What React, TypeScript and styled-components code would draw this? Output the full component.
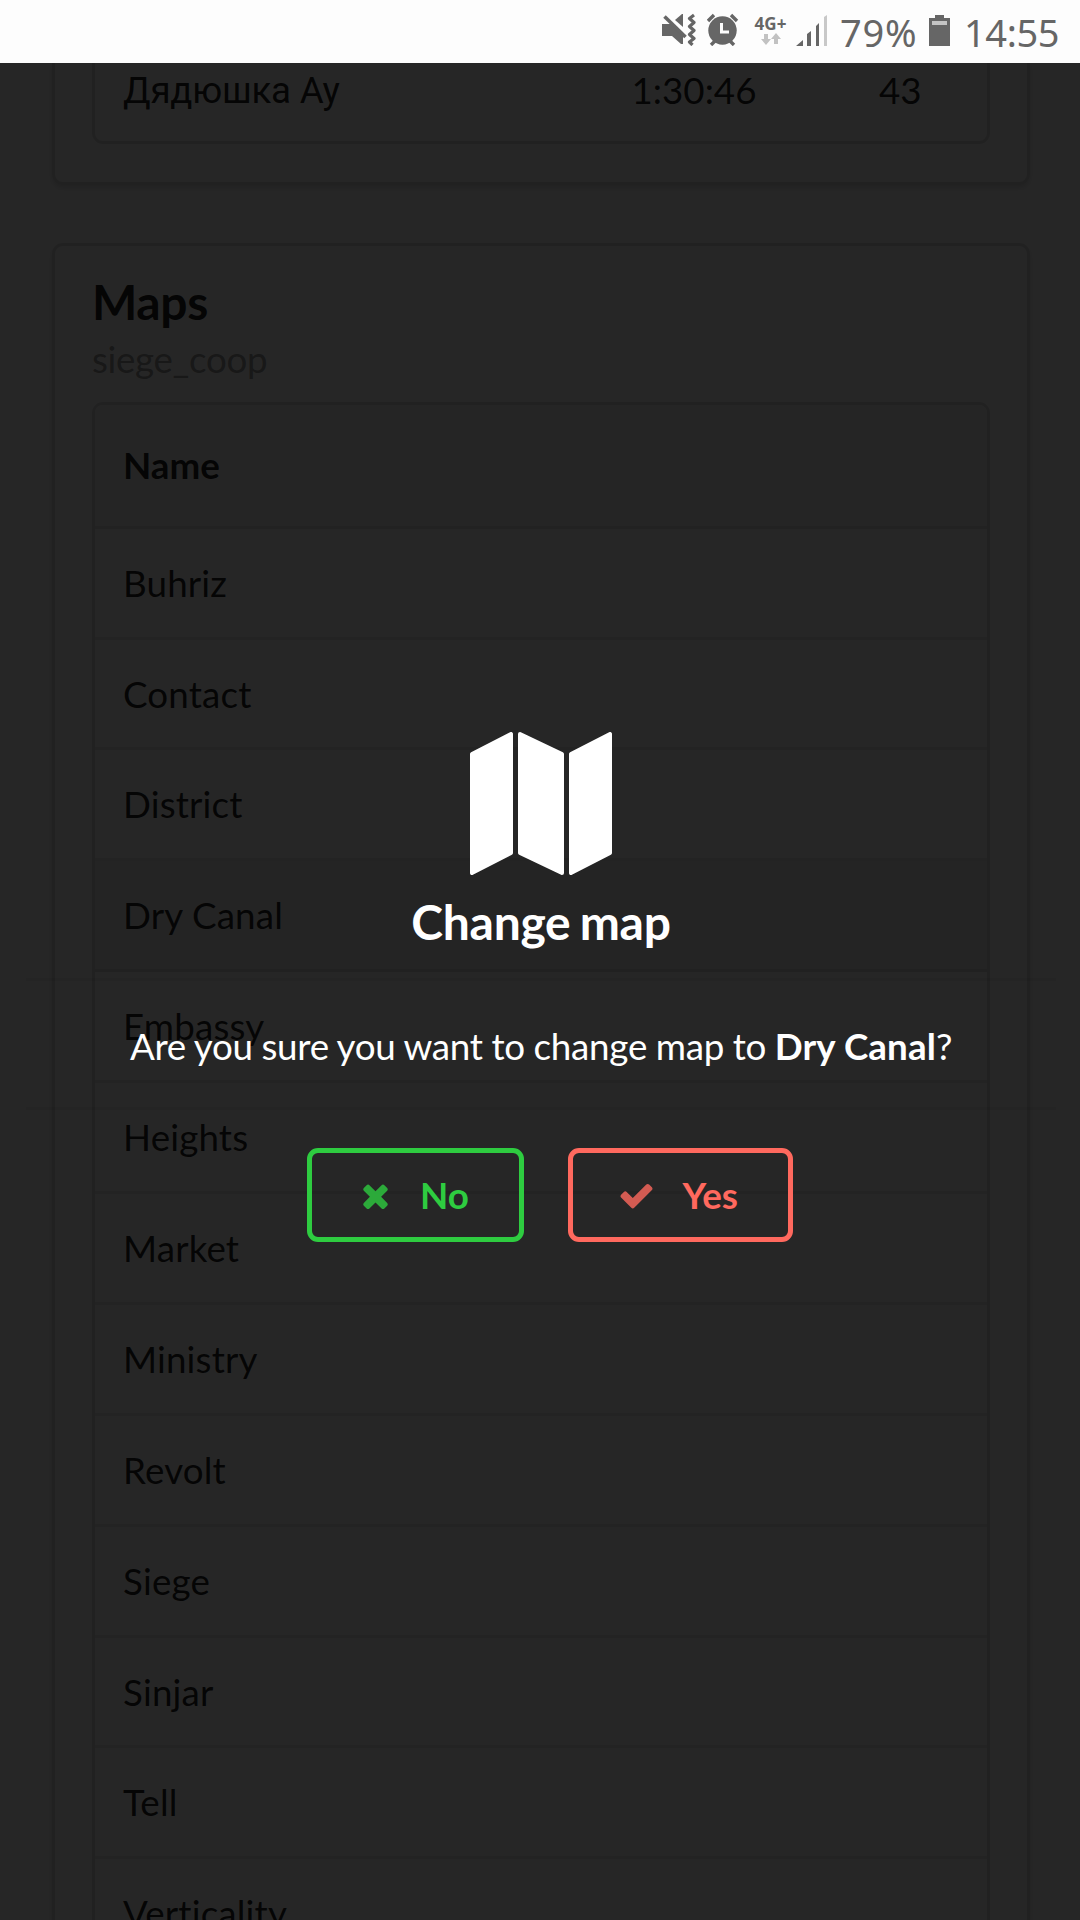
import React from "react";
import styled, { createGlobalStyle } from "styled-components";

const GlobalStyle = createGlobalStyle`
  *, *::before, *::after { box-sizing: border-box; }
  body { margin: 0; background: #ffffff; }
`;

const Screen = styled.div`
  display: flex;
  flex-direction: column;
  width: 1080px;
  height: 1920px;
  overflow: hidden;
  background: #ffffff;
  font-family: Lato, "Liberation Sans", sans-serif;
  font-size: 36.75px;
  font-variant-ligatures: none;
  line-height: 48px;
  color: rgba(0, 0, 0, 0.87);
`;

const StatusBar = styled.header`
  display: flex;
  flex: none;
  align-items: flex-start;
  height: 63px;
  padding: 12px 20px 0 0;
  justify-content: flex-end;
  background: #fdfdfd;
  color: #666666;
  font-family: "Noto Sans", "Open Sans", sans-serif;
  font-size: 38px;
  line-height: 41px;
`;

const StatusIcon = styled.svg<{ $gap: number }>`
  flex: none;
  margin: 1px ${(p) => p.$gap}px 0 0;
  fill: currentColor;
`;

const Network = styled.div`
  display: flex;
  flex-direction: column;
  align-items: center;
  width: 33px;
  margin-right: 9px;
  padding-top: 3px;
  font-size: 17px;
  font-weight: 700;
  line-height: 18px;
  white-space: nowrap;
`;

const Percent = styled.span`
  width: 77px;
  margin-right: 12px;
  letter-spacing: 0.8px;
  white-space: nowrap;
`;

const Clock = styled.span`
  width: 96px;
  letter-spacing: -0.4px;
  white-space: nowrap;
`;

const Viewport = styled.div`
  position: relative;
  flex: 1;
  min-height: 0;
  overflow: hidden;
`;

const Page = styled.main`
  display: flex;
  flex-direction: column;
  gap: 58px;
  padding: 0 50px 0 52px;
`;

const Card = styled.section<{ $continued?: boolean }>`
  padding: ${(p) => (p.$continued ? "0 37px 38px" : "29px 37px 38px")};
  border: 3px solid rgba(34, 36, 38, 0.15);
  border-top-width: ${(p) => (p.$continued ? 0 : 3)}px;
  border-radius: ${(p) => (p.$continued ? "0 0 11px 11px" : "11px")};
  box-shadow: 0 3px 5px rgba(34, 36, 38, 0.15);
`;

const CardTitle = styled.h2`
  margin: 0;
  font-size: 48px;
  font-weight: 700;
  line-height: 54px;
  letter-spacing: -0.4px;
`;

const CardMeta = styled.div`
  margin: 8px 0 21.3px;
  color: rgba(0, 0, 0, 0.4);
  line-height: 44px;
  letter-spacing: -0.35px;
`;

const Table = styled.div<{ $continued?: boolean }>`
  overflow: hidden;
  border: 3px solid rgba(34, 36, 38, 0.15);
  border-top-width: ${(p) => (p.$continued ? 0 : 3)}px;
  border-radius: ${(p) => (p.$continued ? "0 0 11px 11px" : "11px")};
`;

const HeaderRow = styled.div`
  display: flex;
  align-items: center;
  height: 123.4px;
  padding: 0 28px;
  border-bottom: 3px solid rgba(34, 36, 38, 0.1);
  background: #f8f8f8;
  font-weight: 700;
`;

const Row = styled.div<{ $active?: boolean }>`
  display: flex;
  align-items: center;
  height: 110.9px;
  padding: 0 28px;
  border-bottom: 3px solid rgba(34, 36, 38, 0.1);
  background: ${(p) => (p.$active ? "rgba(0, 0, 0, 0.06)" : "transparent")};
  letter-spacing: 0.15px;
`;

const PlayerRow = styled.div`
  display: grid;
  grid-template-columns: 508.5px 247.5px 1fr;
  height: 78px;
  padding: 3px 0 0 28px;
`;

const PlayerName = styled.span`
  padding-top: 1px;
  font-family: Roboto, sans-serif;
  letter-spacing: -0.25px;
`;

const Dimmer = styled.div`
  position: absolute;
  inset: 0;
  display: flex;
  flex-direction: column;
  align-items: center;
  padding: 669px 24px 0 26px;
  background: rgba(0, 0, 0, 0.85);
  color: #ffffff;
`;

const ModalHeader = styled.div`
  display: flex;
  flex-direction: column;
  align-items: center;
  width: 100%;
  height: 249px;
  border-bottom: 3px solid rgba(0, 0, 0, 0.05);
`;

const ModalTitle = styled.h1`
  margin: 18px 0 0;
  font-size: 48px;
  font-weight: 700;
  line-height: 58px;
  letter-spacing: -0.3px;
  word-spacing: -2px;
`;

const ModalBody = styled.p`
  width: 100%;
  height: 129px;
  margin: 0;
  padding-top: 41px;
  border-bottom: 3px solid rgba(0, 0, 0, 0.05);
  text-align: center;
  white-space: nowrap;
  letter-spacing: -0.25px;
  word-spacing: -0.5px;
`;

const MapName = styled.b`
  letter-spacing: 0.1px;
  word-spacing: 0;
`;

const Actions = styled.div`
  display: flex;
  gap: 44px;
  margin: 38px 0 0 18px;
`;

const ActionButton = styled.button<{ $color: string; $width: number; $gap: number }>`
  display: flex;
  align-items: center;
  gap: ${(p) => p.$gap}px;
  width: ${(p) => p.$width}px;
  height: 94px;
  padding: 0 0 0 42px;
  border: 5.25px solid ${(p) => p.$color};
  border-radius: 11px;
  background: transparent;
  color: ${(p) => p.$color};
  font: 700 36.75px Lato, "Liberation Sans", sans-serif;
`;

const ButtonIcon = styled.svg`
  width: 43px;
  height: 37px;
  fill: currentColor;
  opacity: 0.8;
`;

const MapIcon = styled.svg`
  flex: none;
  width: 142px;
  height: 143px;
  fill: #ffffff;
  stroke: #ffffff;
  stroke-width: 4;
  stroke-linejoin: round;
`;

const maps = [
  "Buhriz", "Contact", "District", "Dry Canal", "Embassy", "Heights", "Market",
  "Ministry", "Revolt", "Siege", "Sinjar", "Tell", "Verticality",
];

const selectedMap = "Dry Canal";

function StatusIcons() {
  return (
    <>
      <StatusIcon $gap={11} width="35" height="33" viewBox="0 0 35 33">
        <path d="M1 11h9l12 12v8h-2l-9-8H1z" />
        <path d="M14 7l7-6h1v13z" />
        <path d="M3.500 3.500l21 20.500" stroke="currentColor" strokeWidth="3.600" />
        <path d="M33 2l-4.500 3.500 4.500 4-4.500 4 4.500 4-4.500 4 4.500 4-4.500 3.500 3 3" fill="none" stroke="currentColor" strokeWidth="3.200" strokeLinejoin="round" />
      </StatusIcon>
      <StatusIcon $gap={15} width="32" height="33" viewBox="0 0 32 33">
        <circle cx="15.500" cy="17.500" r="14.200" />
        <path d="M1 8l6-6M30 8l-6-6M4 32l5-5M27 32l-5-5" stroke="currentColor" strokeWidth="3.400" />
        <path d="M14.500 10v9h7.500" fill="none" stroke="#fdfdfd" strokeWidth="3" />
      </StatusIcon>
      <Network>
        4G+
        <svg width="20" height="13" viewBox="0 0 20 13" fill="#c2c2c2">
          <path d="M3 1h4v5h3l-5 6-5-6h3zM13 11h4V6h3l-5-6-5 6h3z" />
        </svg>
      </Network>
      <StatusIcon $gap={12} width="32" height="35" viewBox="0 0 32 35">
        <path d="M0 33l7-6v6zM11 33V21l4-3v15zM20 33V13l3-3v23z" />
        <path d="M28 33V4l3-2v31z" fill="#c8c8c8" />
      </StatusIcon>
    </>
  );
}

function Battery() {
  return (
    <StatusIcon $gap={14} width="21" height="35" viewBox="0 0 21 35">
      <path d="M6 2h9v3h6v28H0V5h6z" />
      <path d="M3 8h15v4H3z" fill="#c4c4c4" />
    </StatusIcon>
  );
}

export default function App() {
  return (
    <Screen>
      <GlobalStyle />
      <StatusBar>
        <StatusIcons />
        <Percent>79%</Percent>
        <Battery />
        <Clock>14:55</Clock>
      </StatusBar>
      <Viewport>
        <Page>
          <Card $continued>
            <Table $continued>
              <PlayerRow>
                <PlayerName>Дядюшка Ау</PlayerName>
                <span>1:30:46</span>
                <span>43</span>
              </PlayerRow>
            </Table>
          </Card>
          <Card>
            <CardTitle>Maps</CardTitle>
            <CardMeta>siege_coop</CardMeta>
            <Table>
              <HeaderRow>Name</HeaderRow>
              {maps.map((name) => (
                <Row key={name} $active={name === selectedMap}>{name}</Row>
              ))}
            </Table>
          </Card>
        </Page>
        <Dimmer>
          <ModalHeader>
            <MapIcon viewBox="0 0 142 143">
              <path d="M2 22L41 2v119L2 141zM50 2l42 20v119l-42-20zM101 22l39-20v119l-39 20z" />
            </MapIcon>
            <ModalTitle>Change map</ModalTitle>
          </ModalHeader>
          <ModalBody>
            Are you sure you want to change map to <MapName>{selectedMap}</MapName>?
          </ModalBody>
          <Actions>
            <ActionButton $color="#2ecc40" $width={217} $gap={23}>
              <ButtonIcon viewBox="0 0 1792 1792">
                <path d="M1490 1322q0 40-28 68l-136 136q-28 28-68 28t-68-28l-294-294-294 294q-28 28-68 28t-68-28l-136-136q-28-28-28-68t28-68l294-294-294-294q-28-28-28-68t28-68l136-136q28-28 68-28t68 28l294 294 294-294q28-28 68-28t68 28l136 136q28 28 28 68t-28 68l-294 294 294 294q28 28 28 68z" />
              </ButtonIcon>
              No
            </ActionButton>
            <ActionButton $color="#ff695e" $width={225} $gap={24.5}>
              <ButtonIcon viewBox="0 0 1792 1792">
                <path d="M1671 566q0 40-28 68l-724 724-136 136q-28 28-68 28t-68-28l-136-136-362-362q-28-28-28-68t28-68l136-136q28-28 68-28t68 28l294 295 656-657q28-28 68-28t68 28l136 136q28 28 28 68z" />
              </ButtonIcon>
              Yes
            </ActionButton>
          </Actions>
        </Dimmer>
      </Viewport>
    </Screen>
  );
}
